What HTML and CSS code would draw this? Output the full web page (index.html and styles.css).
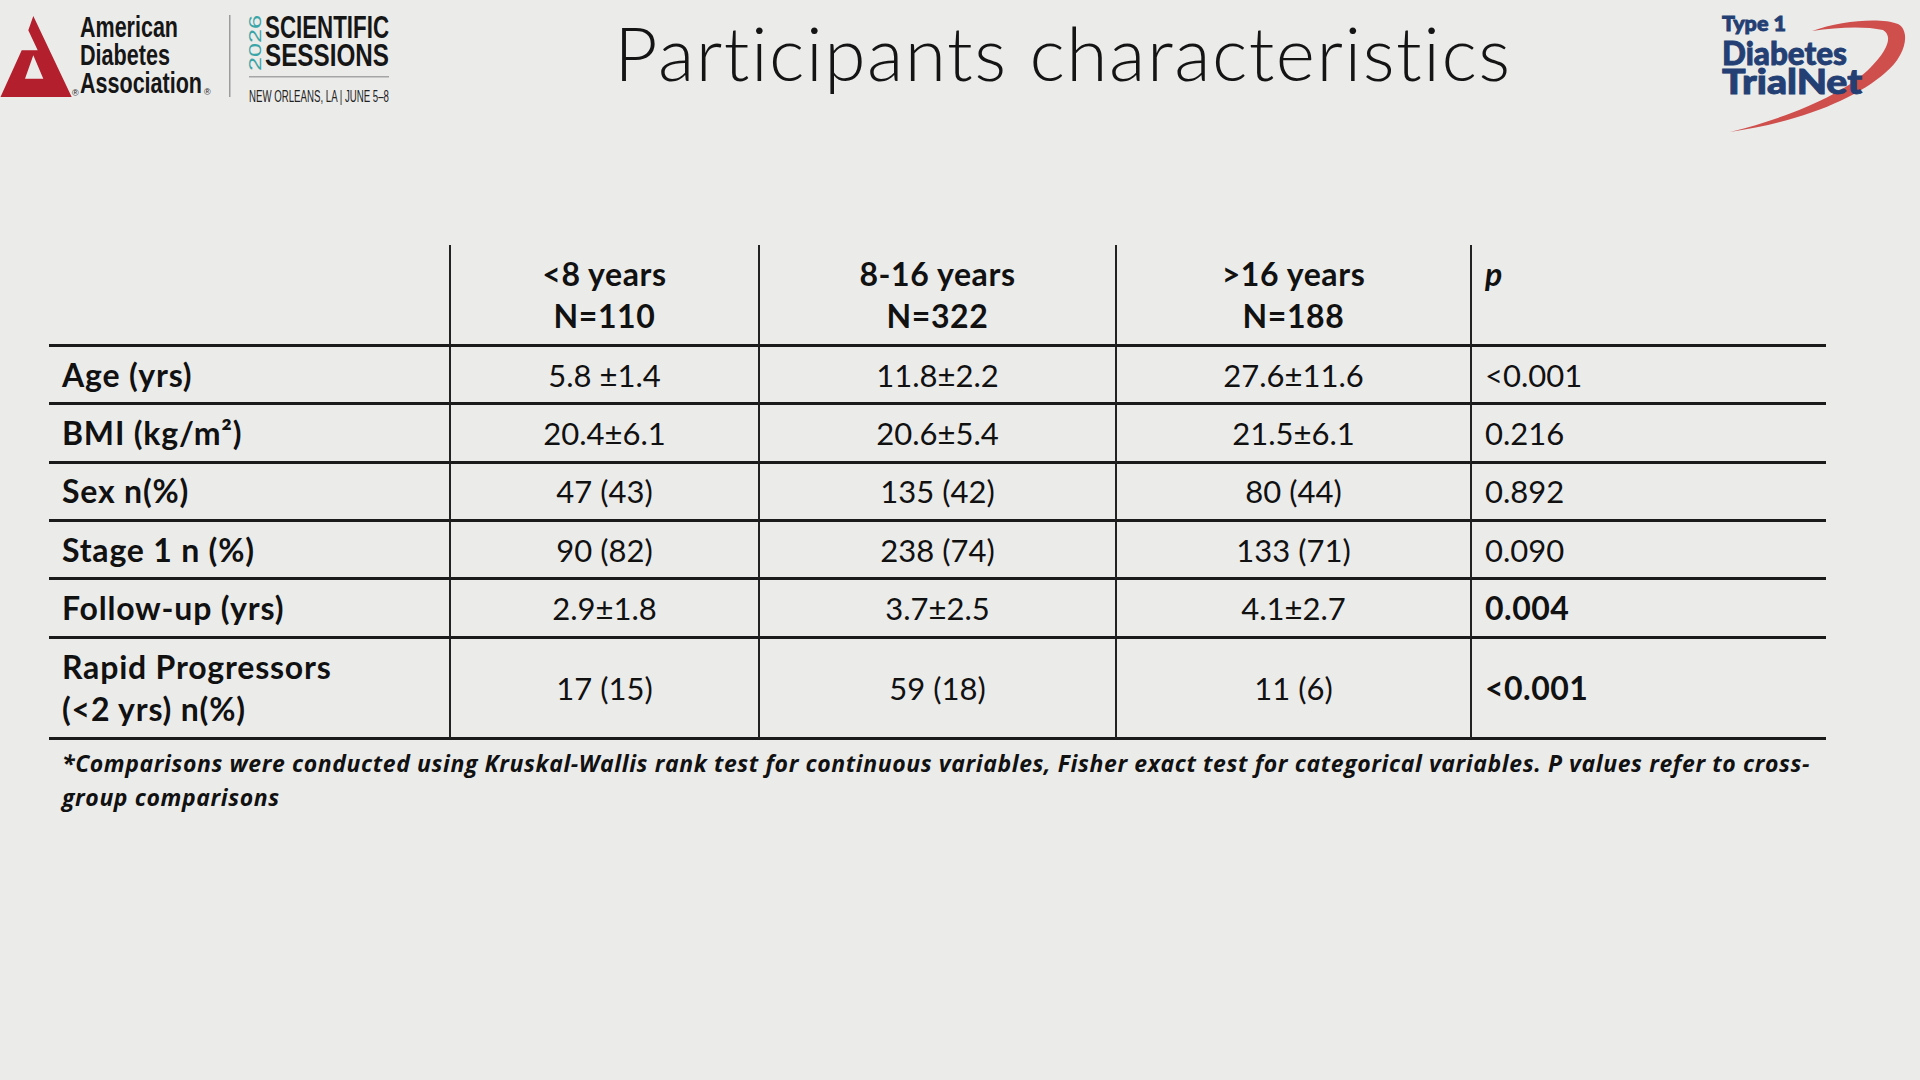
FILE: index.html
```html
<!DOCTYPE html>
<html lang="en">
<head>
<meta charset="utf-8">
<title>Participants characteristics</title>
<link rel="stylesheet" href="styles.css">
</head>
<body>
<div class="slide">
  <header class="top">
    <svg class="ada" viewBox="0 0 400 110" width="400" height="110" xmlns="http://www.w3.org/2000/svg">
      <path fill="#b31f2d" fill-rule="evenodd" d="M33.3,16 L71.7,97 L0.5,97 L21.7,50.3 L37.7,50.3 L28.3,30.3 Z M25,78.7 L43.3,78.7 L33.3,55.3 Z"/>
      <text class="reg" x="72" y="96">®</text>
      <text class="ada-t" x="80" y="37" textLength="98" lengthAdjust="spacingAndGlyphs">American</text>
      <text class="ada-t" x="80" y="65" textLength="90" lengthAdjust="spacingAndGlyphs">Diabetes</text>
      <text class="ada-t" x="80" y="93" textLength="122" lengthAdjust="spacingAndGlyphs">Association</text>
      <text class="reg" x="204" y="95">®</text>
      <rect x="229" y="15" width="1.5" height="82" fill="#9c9c9c"/>
      <text class="yr" transform="translate(261,71) rotate(-90)" textLength="56" lengthAdjust="spacingAndGlyphs">2026</text>
      <text class="ss" x="265" y="38" textLength="124" lengthAdjust="spacingAndGlyphs">SCIENTIFIC</text>
      <text class="ss" x="265" y="66" textLength="124" lengthAdjust="spacingAndGlyphs">SESSIONS</text>
      <rect x="249" y="76" width="140" height="1.5" fill="#a5a5a5"/>
      <text class="loc" x="249" y="102" textLength="140" lengthAdjust="spacingAndGlyphs">NEW ORLEANS, LA | JUNE 5–8</text>
    </svg>
    <h1 class="title">Participants characteristics</h1>
    <svg class="tn" viewBox="1700 0 220 140" width="220" height="140" xmlns="http://www.w3.org/2000/svg">
      <path fill="#cf4f4d" d="M1812,31 C1840,21 1880,17 1898,24 C1911,31 1906,56 1885,73 C1855,99 1800,122 1730,132 C1790,117 1845,94 1871,67 C1888,50 1893,36 1883,30 C1865,26 1838,27 1812,31 Z"/>
      <text class="tn-t" x="1722" y="31" font-size="21" textLength="64" lengthAdjust="spacingAndGlyphs">Type 1</text>
      <text class="tn-t" x="1722" y="65" font-size="33" textLength="125" lengthAdjust="spacingAndGlyphs">Diabetes</text>
      <text class="tn-t" x="1722" y="94" font-size="34" textLength="140" lengthAdjust="spacingAndGlyphs">TrialNet</text>
    </svg>
  </header>

  <main class="content">
    <div class="grid">
      <div class="cell hd"></div>
      <div class="cell hd v">&lt;8 years<br>N=110</div>
      <div class="cell hd v">8-16 years<br>N=322</div>
      <div class="cell hd v">&gt;16 years<br>N=188</div>
      <div class="cell hd v pv"><i>p</i></div>

      <div class="cell lbl">Age (yrs)</div>
      <div class="cell v">5.8 ±1.4</div>
      <div class="cell v">11.8±2.2</div>
      <div class="cell v">27.6±11.6</div>
      <div class="cell v pv">&lt;0.001</div>

      <div class="cell lbl">BMI (kg/m²)</div>
      <div class="cell v">20.4±6.1</div>
      <div class="cell v">20.6±5.4</div>
      <div class="cell v">21.5±6.1</div>
      <div class="cell v pv">0.216</div>

      <div class="cell lbl">Sex n(%)</div>
      <div class="cell v">47 (43)</div>
      <div class="cell v">135 (42)</div>
      <div class="cell v">80 (44)</div>
      <div class="cell v pv">0.892</div>

      <div class="cell lbl">Stage 1 n (%)</div>
      <div class="cell v">90 (82)</div>
      <div class="cell v">238 (74)</div>
      <div class="cell v">133 (71)</div>
      <div class="cell v pv">0.090</div>

      <div class="cell lbl">Follow-up (yrs)</div>
      <div class="cell v">2.9±1.8</div>
      <div class="cell v">3.7±2.5</div>
      <div class="cell v">4.1±2.7</div>
      <div class="cell v pv strong">0.004</div>

      <div class="cell lbl">Rapid Progressors<br>(&lt;2 yrs) n(%)</div>
      <div class="cell v">17 (15)</div>
      <div class="cell v">59 (18)</div>
      <div class="cell v">11 (6)</div>
      <div class="cell v pv strong">&lt;0.001</div>
    </div>
    <p class="note">*Comparisons were conducted using Kruskal-Wallis rank test for continuous variables, Fisher exact test for categorical variables. P values refer to cross-<br>group comparisons</p>
  </main>
</div>
</body>
</html>
```

FILE: styles.css
```css
html, body {
  margin: 0;
  padding: 0;
  background: #ebebea;
}

.slide {
  width: 1920px;
  height: 1080px;
  overflow: hidden;
  background: #ebebea;
  color: #111111;
  font-family: Lato, "Open Sans", sans-serif;
  font-variant-ligatures: none;
}

/* ---------- header ---------- */
.top {
  display: flex;
  height: 140px;
}

.ada,
.tn {
  flex: none;
  display: block;
}

.title {
  flex: 1;
  margin: 15px 0 0;
  padding-left: 26px;
  font-family: Lato, "Open Sans", sans-serif;
  font-weight: 300;
  font-size: 75px;
  line-height: 75px;
  letter-spacing: 1.5px;
  text-align: center;
  color: #141414;
  white-space: nowrap;
  font-variant-ligatures: none;
}

.ada-t {
  font-family: "Liberation Sans", Arial, sans-serif;
  font-weight: 700;
  font-size: 30px;
  fill: #161616;
}

.reg {
  font-family: "Liberation Sans", Arial, sans-serif;
  font-size: 9px;
  fill: #222;
}

.yr {
  font-family: "Liberation Sans", Arial, sans-serif;
  font-size: 16px;
  fill: #3aa5a7;
}

.ss {
  font-family: "Liberation Sans", Arial, sans-serif;
  font-weight: 700;
  font-size: 31px;
  fill: #161616;
}

.loc {
  font-family: "Liberation Sans", Arial, sans-serif;
  font-size: 16px;
  fill: #222;
}

.tn-t {
  font-family: Lato, "DejaVu Sans", sans-serif;
  font-weight: 900;
  fill: #233f73;
  stroke: #233f73;
  stroke-width: 0.9px;
}

/* ---------- table ---------- */
.content {
  padding: 105px 0 0 49px;
}

.grid {
  display: grid;
  grid-template-columns: 400px 309px 357px 355px 356px;
  grid-template-rows: 102px repeat(5, 58.33px) 101px;
  width: 1777px;
}

.cell {
  box-sizing: border-box;
  border-bottom: 3px solid #1b1b1b;
  display: flex;
  align-items: center;
  justify-content: center;
  font-size: 31px;
  line-height: 42px;
  white-space: nowrap;
}

.cell.v {
  border-left: 2px solid #222;
}

.cell.hd {
  align-items: flex-start;
  padding-top: 8px;
  font-weight: 700;
  font-size: 32px;
  letter-spacing: 0.6px;
  text-align: center;
}

.cell.lbl {
  justify-content: flex-start;
  padding-left: 13px;
  font-weight: 700;
  font-size: 32px;
  letter-spacing: 0.8px;
}

.cell.pv {
  justify-content: flex-start;
  padding-left: 13px;
  text-align: left;
}

.cell.strong {
  font-weight: 700;
  font-size: 32px;
  letter-spacing: 0.5px;
}

.note {
  margin: 6px 0 0;
  padding-left: 13px;
  font-family: "Open Sans", Lato, sans-serif;
  font-style: italic;
  font-weight: 700;
  font-size: 23px;
  line-height: 34px;
  letter-spacing: 0.6px;
  white-space: nowrap;
}
```
